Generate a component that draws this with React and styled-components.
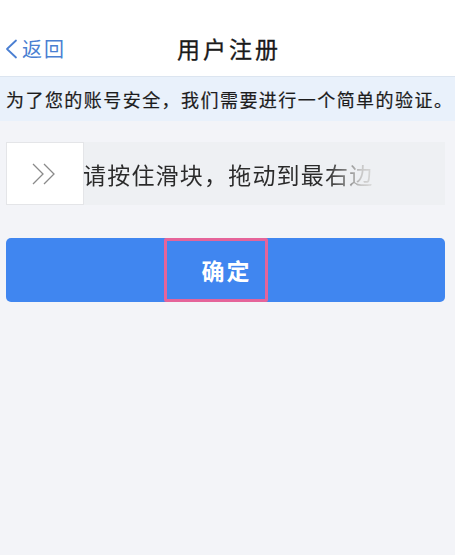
import React from "react"
import styled, { createGlobalStyle } from "styled-components"

const GlobalStyle = createGlobalStyle`
    html, body {
        margin: 0;
        padding: 0;
        background: #f3f4f8;
        font-family: "Noto Sans CJK SC", "Noto Sans", sans-serif;
    }
`

function BackChevron() {
    return (
        <svg width="13" height="20" viewBox="0 0 13 20">
            <path d="M11 1.5 L2 10 L11 18.5" fill="none" stroke="#4a7fd2" strokeWidth="1.8" strokeLinecap="round" strokeLinejoin="round" />
        </svg>
    )
}

function DoubleArrow() {
    return (
        <svg width="26" height="24" viewBox="0 0 26 24">
            <path d="M2 2 L12 12 L2 22" fill="none" stroke="#8a8a8a" strokeWidth="1.3" />
            <path d="M13 2 L23 12 L13 22" fill="none" stroke="#8a8a8a" strokeWidth="1.3" />
        </svg>
    )
}

export default function App() {
    return (
        <Page>
            <GlobalStyle />
            <Header>
                <BackLink>
                    <BackChevron />
                    <BackText>返回</BackText>
                </BackLink>
                <Title>用户注册</Title>
            </Header>
            <Notice>为了您的账号安全，我们需要进行一个简单的验证。</Notice>
            <Content>
                <SliderTrack>
                    <SliderHandle>
                        <DoubleArrow />
                    </SliderHandle>
                    <SliderHint>请按住滑块，拖动到最右边</SliderHint>
                </SliderTrack>
                <ConfirmButton>
                    <Highlight />
                    <ButtonLabel>确定</ButtonLabel>
                </ConfirmButton>
            </Content>
        </Page>
    )
}

const Page = styled.div`
    min-height: 555px;
    background: #f3f4f8;
`
const Header = styled.header`
    position: relative;
    height: 76px;
    background: #ffffff;
    display: flex;
    align-items: center;
    justify-content: center;
    padding-top: 20px;
    box-sizing: border-box;
`
const BackLink = styled.div`
    position: absolute;
    left: 5px;
    top: 38px;
    display: flex;
    align-items: center;
    gap: 4px;
    color: #4a7fd2;
    cursor: pointer;
`
const BackText = styled.span`
    font-size: 20px;
    letter-spacing: 2px;
    line-height: 22px;
`
const Title = styled.h1`
    margin: 0;
    font-size: 23px;
    font-weight: 400;
    letter-spacing: 3px;
    color: #1a1a1a;
    padding-left: 3px;
    -webkit-text-stroke: 0.3px #1a1a1a;
`
const Notice = styled.div`
    height: 44px;
    display: flex;
    align-items: center;
    padding-left: 6px;
    background: #e9f1fb;
    border-top: 1px solid #dce5f0;
    font-size: 18px;
    letter-spacing: 1.45px;
    color: #1c1c1c;
    -webkit-text-stroke: 0.2px #1c1c1c;
    white-space: nowrap;
    overflow: hidden;
`
const Content = styled.div`
    padding: 21px 10px 0 6px;
    display: flex;
    flex-direction: column;
    gap: 33px;
`
const SliderTrack = styled.div`
    height: 63px;
    background: #eef0f3;
    display: flex;
    align-items: center;
`
const SliderHandle = styled.div`
    width: 78px;
    height: 63px;
    box-sizing: border-box;
    background: #ffffff;
    border: 1px solid #e4e5e8;
    display: flex;
    align-items: center;
    justify-content: center;
    padding-right: 2px;
`
const SliderHint = styled.span`
    font-size: 23px;
    letter-spacing: 1.2px;
    margin-left: -1px;
    background: linear-gradient(90deg, #2a2a2a 0%, #2a2a2a 84%, #c8c8c8 96%, #d8d8d8 100%);
    -webkit-background-clip: text;
    background-clip: text;
    color: transparent;
`
const ConfirmButton = styled.button`
    position: relative;
    height: 64px;
    border: none;
    border-radius: 5px;
    background: #4086f0;
    display: flex;
    align-items: center;
    justify-content: center;
    cursor: pointer;
    padding: 0;
`
const Highlight = styled.span`
    position: absolute;
    left: 158px;
    top: 0;
    bottom: 0;
    width: 104px;
    box-sizing: border-box;
    border: 3px solid #e5649a;
    border-radius: 2px;
`
const ButtonLabel = styled.span`
    font-family: "Noto Sans CJK SC", sans-serif;
    font-size: 23px;
    font-weight: 700;
    letter-spacing: 2px;
    color: #ffffff;
    padding-left: 2px;
`
